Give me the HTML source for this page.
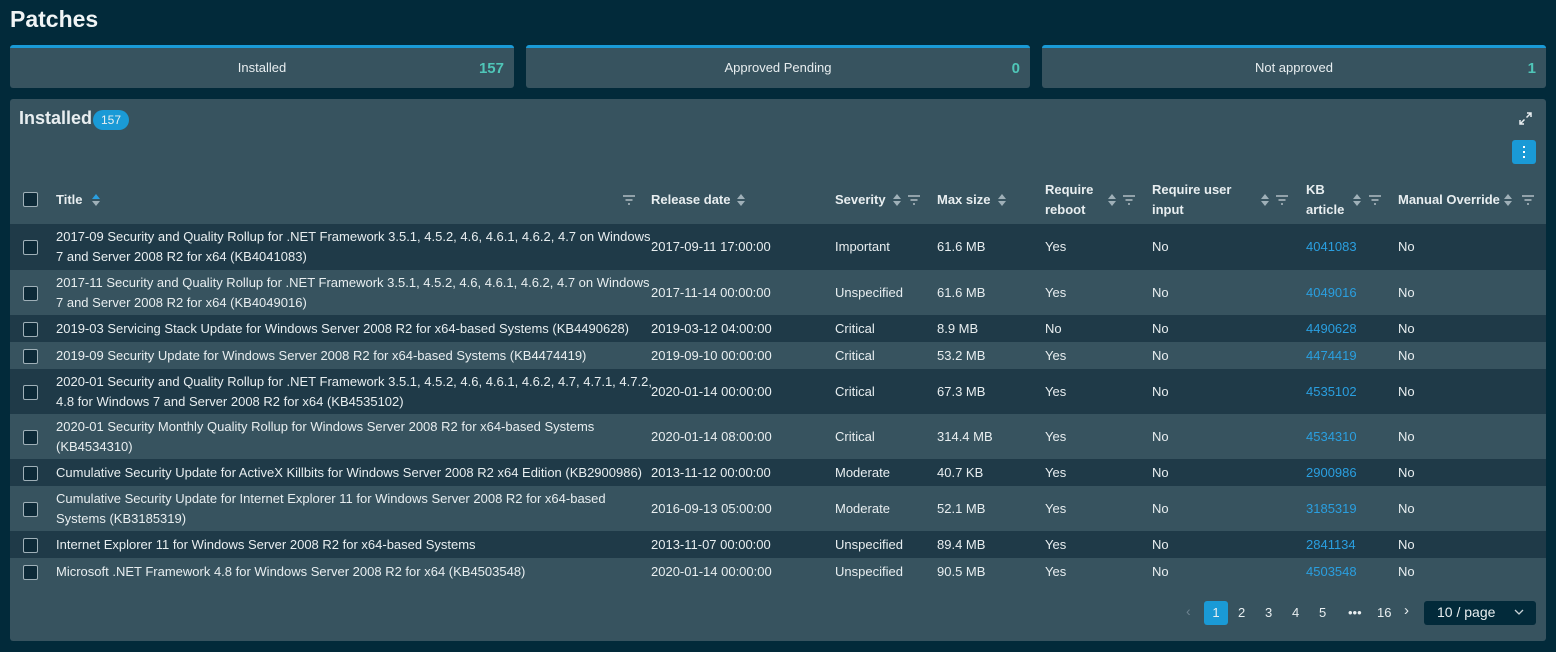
<!DOCTYPE html><html><head><style>
*{box-sizing:border-box;margin:0;padding:0}
body{width:1556px;height:652px;background:#022a3a;font-family:"Liberation Sans",sans-serif;color:#e8eef0;position:relative;overflow:hidden;font-size:13px}
.abs{position:absolute}
h1{position:absolute;left:10px;top:6px;font-size:23px;font-weight:bold;color:#f0f4f5}
.stat{position:absolute;top:45px;height:43px;width:504px;background:#37535f;border-top:3px solid #1a9ad6;border-radius:3px}
.stat .l{position:absolute;left:0;right:0;top:12px;text-align:center;font-size:13px}
.stat .n{position:absolute;right:10px;top:12px;font-size:15px;font-weight:bold;color:#4fc6b8}
.card{position:absolute;left:10px;top:99px;width:1536px;height:542px;background:#37535f;border-radius:3px}
.row{position:absolute;left:10px;width:1536px}
.d{background:#1f3a48}
.cell{position:absolute;font-size:13px;line-height:20px}
.cb{position:absolute;left:13px;width:15px;height:15px;border:1px solid #9fb0b8;background:#0d2a38;border-radius:2px}
.hd{font-weight:bold}
.kb{color:#2a9fe0}
.sort{position:absolute;width:8px;height:14px}
</style></head><body>
<h1>Patches</h1>
<div class="stat" style="left:10px"><div class="l">Installed</div><div class="n">157</div></div>
<div class="stat" style="left:526px"><div class="l">Approved Pending</div><div class="n">0</div></div>
<div class="stat" style="left:1042px"><div class="l">Not approved</div><div class="n">1</div></div>
<div class="card"></div>
<div class="abs" style="left:19px;top:108px;font-size:18px;font-weight:bold">Installed</div>
<div class="abs" style="left:93px;top:110px;width:36px;height:20px;background:#1a9ad6;border-radius:10px;font-size:12px;text-align:center;line-height:20px">157</div>
<svg class="abs" style="left:1518px;top:111px" width="15" height="15" viewBox="0 0 15 15" fill="none" stroke="#e8eef0" stroke-width="1.5"><path d="M9 2h4v4M13 2L8.5 6.5M6 13H2V9M2 13l4.5-4.5"/></svg>
<div class="abs" style="left:1512px;top:140px;width:24px;height:24px;background:#1a9ad6;border-radius:3px"><div style="position:absolute;left:11px;top:6px;width:2px;height:2px;background:#fff;box-shadow:0 5px #fff,0 10px #fff"></div></div>
<div id="t"></div>
<script>
var cols=[56,651,835,937,1045,1152,1306,1398];
var h='';
h+='<div class="row" style="top:178px;height:46px"><div class="cb" style="top:14px"></div></div>';
var hs=[['Title',56,96,629],['Release date',651,741,null],['Severity',835,897,914],['Max size',937,1002,null],['Require<br>reboot',1045,1112,1129],['Require user<br>input',1152,1265,1282],['KB<br>article',1306,1357,1375],['Manual Override',1398,1508,1528]];
hs.forEach(function(c){var two=c[0].indexOf('<br>')>0;h+='<div class="cell hd" style="left:'+c[1]+'px;top:'+(two?180:190)+'px">'+c[0]+'</div>';
h+='<svg class="abs" style="left:'+(c[2]-4)+'px;top:193px" width="8" height="14" viewBox="0 0 8 14"><path d="M4 1L8 6H0z" fill="'+(c[1]==56?'#2a9fe0':'#9fb0b8')+'"/><path d="M4 13L8 8H0z" fill="#9fb0b8"/></svg>';
if(c[3])h+='<svg class="abs" style="left:'+(c[3]-6)+'px;top:195px" width="12" height="10" viewBox="0 0 12 10" stroke="#c8d2d6" stroke-width="1.3"><path d="M0 1h12M2.5 5h7M5 9h2"/></svg>';});
var rows=[[224,46,'2017-09 Security and Quality Rollup for .NET Framework 3.5.1, 4.5.2, 4.6, 4.6.1, 4.6.2, 4.7 on Windows<br>7 and Server 2008 R2 for x64 (KB4041083)','2017-09-11 17:00:00','Important','61.6 MB','Yes','4041083'],
[270,45,'2017-11 Security and Quality Rollup for .NET Framework 3.5.1, 4.5.2, 4.6, 4.6.1, 4.6.2, 4.7 on Windows<br>7 and Server 2008 R2 for x64 (KB4049016)','2017-11-14 00:00:00','Unspecified','61.6 MB','Yes','4049016'],
[315,27,'2019-03 Servicing Stack Update for Windows Server 2008 R2 for x64-based Systems (KB4490628)','2019-03-12 04:00:00','Critical','8.9 MB','No','4490628'],
[342,27,'2019-09 Security Update for Windows Server 2008 R2 for x64-based Systems (KB4474419)','2019-09-10 00:00:00','Critical','53.2 MB','Yes','4474419'],
[369,45,'2020-01 Security and Quality Rollup for .NET Framework 3.5.1, 4.5.2, 4.6, 4.6.1, 4.6.2, 4.7, 4.7.1, 4.7.2,<br>4.8 for Windows 7 and Server 2008 R2 for x64 (KB4535102)','2020-01-14 00:00:00','Critical','67.3 MB','Yes','4535102'],
[414,45,'2020-01 Security Monthly Quality Rollup for Windows Server 2008 R2 for x64-based Systems<br>(KB4534310)','2020-01-14 08:00:00','Critical','314.4 MB','Yes','4534310'],
[459,27,'Cumulative Security Update for ActiveX Killbits for Windows Server 2008 R2 x64 Edition (KB2900986)','2013-11-12 00:00:00','Moderate','40.7 KB','Yes','2900986'],
[486,45,'Cumulative Security Update for Internet Explorer 11 for Windows Server 2008 R2 for x64-based<br>Systems (KB3185319)','2016-09-13 05:00:00','Moderate','52.1 MB','Yes','3185319'],
[531,27,'Internet Explorer 11 for Windows Server 2008 R2 for x64-based Systems','2013-11-07 00:00:00','Unspecified','89.4 MB','Yes','2841134'],
[558,27,'Microsoft .NET Framework 4.8 for Windows Server 2008 R2 for x64 (KB4503548)','2020-01-14 00:00:00','Unspecified','90.5 MB','Yes','4503548']];
rows.forEach(function(r,i){var y=r[0],ht=r[1],mid=y+ht/2;
h+='<div class="row'+(i%2==0?' d':'')+'" style="top:'+y+'px;height:'+ht+'px"><div class="cb" style="top:'+(ht/2-7)+'px"></div></div>';
var two=r[2].indexOf('<br>')>0;
h+='<div class="cell" style="left:56px;top:'+(mid-(two?20:10))+'px">'+r[2]+'</div>';
var vals=[r[3],r[4],r[5],r[6],'No','<span class="kb">'+r[7]+'</span>','No'];
vals.forEach(function(v,j){h+='<div class="cell" style="left:'+cols[j+1]+'px;top:'+(mid-10)+'px">'+v+'</div>';});});
document.getElementById('t').innerHTML=h;
</script>
<div class="abs" style="left:1186px;top:603px;color:#6d8390;font-size:14px">&lsaquo;</div>
<div class="abs" style="left:1204px;top:601px;width:24px;height:24px;background:#1a9ad6;border-radius:3px;text-align:center;line-height:24px;font-size:13px">1</div>
<div class="abs" style="left:1238px;top:605px;font-size:13px">2</div>
<div class="abs" style="left:1265px;top:605px;font-size:13px">3</div>
<div class="abs" style="left:1292px;top:605px;font-size:13px">4</div>
<div class="abs" style="left:1319px;top:605px;font-size:13px">5</div>
<div class="abs" style="left:1348px;top:605px;font-size:13px">•••</div>
<div class="abs" style="left:1377px;top:605px;font-size:13px">16</div>
<div class="abs" style="left:1404px;top:602px;font-size:15px">&rsaquo;</div>
<div class="abs" style="left:1424px;top:601px;width:112px;height:24px;background:#022a3a;border-radius:3px;font-size:14px;line-height:22px;padding-left:13px">10 / page</div>
<svg class="abs" style="left:1514px;top:609px" width="10" height="7" viewBox="0 0 10 7" fill="none" stroke="#c8d2d6" stroke-width="1.3"><path d="M1 1l4 4 4-4"/></svg>
</body></html>
